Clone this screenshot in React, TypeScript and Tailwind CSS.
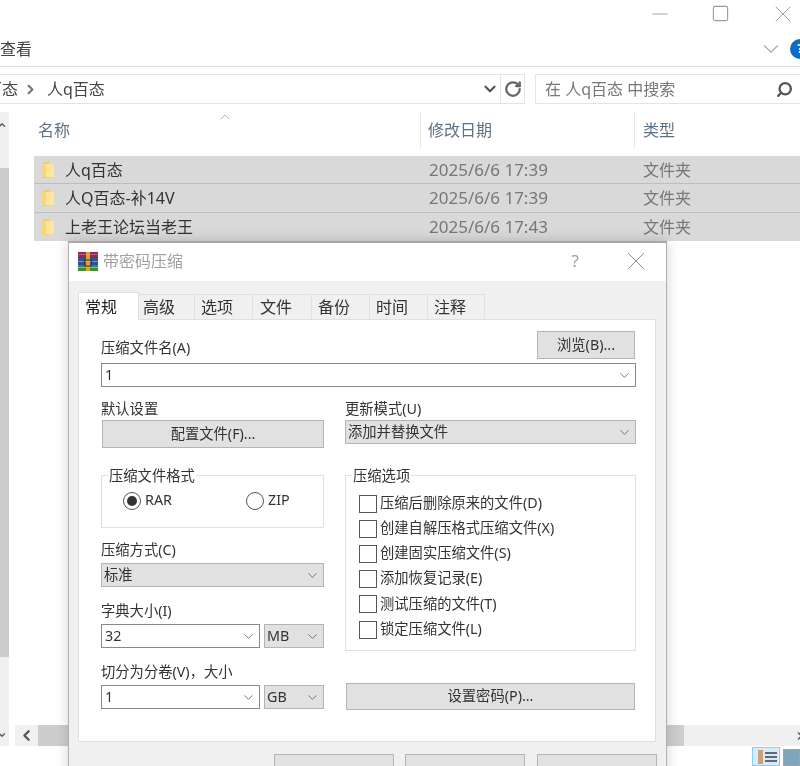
import type { ReactNode } from "react";
import { ChevronDown, ChevronLeft, ChevronRight, ChevronUp, Minus, RotateCw, Search, Square, X } from "lucide-react";

const FONT = { fontFamily: '"Noto Sans", "Noto Sans CJK SC", sans-serif' };

const rows = [
  { name: "人q百态", date: "2025/6/6 17:39" },
  { name: "人Q百态-补14V", date: "2025/6/6 17:39" },
  { name: "上老王论坛当老王", date: "2025/6/6 17:43" },
];

const tabs = [
  { label: "高级", cls: "w-[56px] pl-[4px]" },
  { label: "选项", cls: "w-[58px] pl-[6px]" },
  { label: "文件", cls: "w-[59px] pl-[7px]" },
  { label: "备份", cls: "w-[58px] pl-[6px]" },
  { label: "时间", cls: "w-[58px] pl-[6px]" },
  { label: "注释", cls: "w-[57px] pl-[6px]" },
];

const options = [
  "压缩后删除原来的文件(D)",
  "创建自解压格式压缩文件(X)",
  "创建固实压缩文件(S)",
  "添加恢复记录(E)",
  "测试压缩的文件(T)",
  "锁定压缩文件(L)",
];

function Folder() {
  return (
    <svg width="14" height="18" viewBox="0 0 14 18" className="shrink-0">
      <path d="M1 2 L8 0.5 L8 16.5 L1 17 Z" fill="#f2c95c" />
      <path d="M5 3 H13 V16 H5 Z" fill="#fde59a" />
      <path d="M1 2 L5 3 V16 L1 17 Z" fill="#f5d67c" />
    </svg>
  );
}

// winrar's stack of books
function RarIcon() {
  return (
    <svg width="20" height="19" viewBox="0 0 20 19" className="shrink-0">
      <rect x="0" y="0" width="20" height="6" fill="#8e2a4e" />
      <rect x="0" y="6" width="20" height="7" fill="#2c4f9e" />
      <rect x="0" y="13" width="20" height="6" fill="#3f8a3c" />
      <rect x="0" y="2" width="20" height="1" fill="#c9578f" />
      <rect x="0" y="9" width="20" height="1" fill="#6f8ed6" />
      <rect x="0" y="15" width="20" height="1" fill="#84c070" />
      <rect x="8" y="0" width="4" height="19" fill="#d8a13a" />
      <rect x="6.5" y="8" width="7" height="6" fill="none" stroke="#4a3a20" strokeWidth="1" />
    </svg>
  );
}

function Caret({ size = 15 }: { size?: number }) {
  return <ChevronDown size={size} strokeWidth={1.25} className="shrink-0 text-[#555]" />;
}

function Select({ text, className }: { text: string; className: string }) {
  return (
    <div className={`flex h-[24px] items-center justify-between border border-[#b4b4b4] bg-[#e1e1e1] pl-[2px] pr-[3px] text-[14.3px] text-[#333] ${className}`}>
      <span className="pb-[1px]">{text}</span>
      <Caret />
    </div>
  );
}

function Combo({ text, className }: { text: string; className: string }) {
  return (
    <div className={`flex h-[24px] items-center justify-between border border-[#8a8a8a] bg-white pl-[3px] pr-[3px] text-[14.3px] text-[#333] ${className}`}>
      <span className="pb-[1px]">{text}</span>
      <Caret />
    </div>
  );
}

function Btn({ children, className }: { children?: ReactNode; className: string }) {
  return (
    <div className={`flex items-center justify-center border border-[#b4b4b4] bg-[#e1e1e1] pb-[1px] text-[14.3px] text-[#333] ${className}`}>
      {children}
    </div>
  );
}

function Label({ children }: { children: ReactNode }) {
  return <div className="flex h-[20px] items-center pb-[1px] text-[14.3px] leading-none text-[#333]">{children}</div>;
}

function Group({ title, className, children }: { title: string; className: string; children: ReactNode }) {
  return (
    <div className={`relative border border-[#e0e0e0] ${className}`}>
      <span className="absolute left-[6px] top-[-10px] bg-white px-px text-[14.3px] leading-[20px] text-[#333]">{title}</span>
      {children}
    </div>
  );
}

function Radio({ label, on, className }: { label: string; on?: boolean; className: string }) {
  return (
    <div className={`flex items-center gap-[4px] text-[14.3px] text-[#333] ${className}`}>
      <span className="flex h-[18px] w-[18px] items-center justify-center rounded-full border border-[#555] bg-white">
        {on && <span className="h-[10px] w-[10px] rounded-full bg-[#333]" />}
      </span>
      <span className="pb-[2px]">{label}</span>
    </div>
  );
}

function Dialog() {
  return (
    <div className="absolute left-[68px] top-[241px] flex h-[540px] w-[599px] flex-col border border-t-2 border-[#b0b0b0] border-t-[#a8a8a8] bg-[#f0f0f0] shadow-[0_0_12px_rgba(0,0,0,0.18)]">
      <div className="flex h-[38px] shrink-0 items-center bg-white pb-[2px] pl-[9px] pr-[15px]">
        <RarIcon />
        <span className="ml-[5px] text-[16px] text-[#a0a0a0]">带密码压缩</span>
        <span className="ml-auto text-[17px] text-[#a0a0a0]">?</span>
        <X size={30} strokeWidth={0.8} className="ml-[42px] text-[#8a8a8a]" />
      </div>

      <div className="flex flex-1 flex-col px-[9px] pt-[11px]">
        <div className="relative z-10 flex h-[28px] items-end">
          <div className="flex h-[28px] w-[61px] items-center border border-b-0 border-[#e0e0e0] bg-white pl-[6px] text-[16px] text-[#222]">常规</div>
          {tabs.map((t) => (
            <div key={t.label} className={`flex h-[26px] items-center border-y border-r border-[#e0e0e0] bg-[#f0f0f0] text-[16px] text-[#333] ${t.cls}`}>
              {t.label}
            </div>
          ))}
        </div>

        <div className="-mt-px h-[423px] w-[578px] border border-[#e0e0e0] bg-white pl-[22px] pr-[18px] pt-[11px]">
          <div className="flex items-center justify-between pr-[2px]">
            <div className="pt-[7px]"><Label>压缩文件名(A)</Label></div>
            <Btn className="h-[28px] w-[98px]">浏览(B)...</Btn>
          </div>
          <Combo text="1" className="mt-[4px] w-[535px]" />

          <div className="mt-[13px] flex gap-[21px]">
            <div className="w-[223px]">
              <Label>默认设置</Label>
              <Btn className="ml-px h-[28px] w-[222px]">配置文件(F)...</Btn>

              <Group title="压缩文件格式" className="mt-[27px] flex h-[53px] items-start pt-[13px]">
                <Radio label="RAR" on className="ml-[21px] w-[123px]" />
                <Radio label="ZIP" className="" />
              </Group>

              <div className="mt-[13px]"><Label>压缩方式(C)</Label></div>
              <Select text="标准" className="mt-[2px] w-[223px]" />

              <div className="mt-[15px]"><Label>字典大小(I)</Label></div>
              <div className="mt-[2px] flex gap-[4px]">
                <Combo text="32" className="w-[159px]" />
                <Select text="MB" className="w-[60px]" />
              </div>

              <div className="mt-[15px]"><Label>切分为分卷(V)，大小</Label></div>
              <div className="mt-[2px] flex gap-[4px]">
                <Combo text="1" className="w-[159px]" />
                <Select text="GB" className="w-[60px]" />
              </div>
            </div>

            <div className="w-[291px]">
              <Label>更新模式(U)</Label>
              <Select text="添加并替换文件" className="w-[291px]" />

              <Group title="压缩选项" className="mt-[31px] h-[176px] pl-[13px] pt-[15px]">
                {options.map((o) => (
                  <div key={o} className="flex h-[25.2px] items-center gap-[3px] text-[14.3px] text-[#333]">
                    <span className="h-[18px] w-[18px] shrink-0 border border-[#555] bg-white" />
                    <span className="pb-[2px]">{o}</span>
                  </div>
                ))}
              </Group>

              <Btn className="ml-px mt-[32px] h-[27px] w-[289px]">设置密码(P)...</Btn>
            </div>
          </div>
        </div>

        <div className="mt-[12px] flex justify-end">
          <Btn className="h-[28px] w-[120px]" />
          <Btn className="ml-[11px] h-[28px] w-[120px]" />
          <Btn className="ml-[12px] h-[28px] w-[120px]" />
        </div>
      </div>
    </div>
  );
}

export default function App() {
  return (
    <div className="relative flex h-[766px] w-[800px] flex-col overflow-hidden bg-white text-[#444] blur-[0.35px]" style={FONT}>
      <div className="flex h-[33px] shrink-0 items-start justify-end pr-[3px] text-[#9a9a9a]">
        <div className="flex h-[27px] items-center gap-[39px]">
          <Minus size={24} strokeWidth={0.9} />
          <Square size={19} strokeWidth={1.4} />
          <X size={28} strokeWidth={0.8} />
        </div>
      </div>

      <div className="flex h-[34px] shrink-0 items-center border-b border-[#dcdcdc] pb-px">
        <span className="text-[16px] text-[#444]">查看</span>
        <ChevronDown size={26} strokeWidth={1} className="ml-auto mr-[6px] text-[#a8a8a8]" />
        <span className="mr-[-10px] flex h-[20px] w-[20px] items-center justify-center rounded-full bg-[#0a6cc4] text-[12px] font-bold text-white">?</span>
      </div>

      <div className="mt-[7px] flex h-[30px] shrink-0">
        <div className="flex w-[501px] items-center border-y border-r border-[#e4e4e4] text-[16px] text-[#444]">
          <span className="ml-[-14px]">百态</span>
          <ChevronRight size={15} strokeWidth={3.5} className="ml-[5px] text-[#777]" />
          <span className="ml-[9px]">人q百态</span>
          <ChevronDown size={18} strokeWidth={3} className="ml-auto mr-[1px] text-[#555]" />
        </div>
        <div className="flex w-[24px] items-center justify-center border-y border-r border-[#e4e4e4]">
          <RotateCw size={18} strokeWidth={3} className="text-[#666]" />
        </div>
        <div className="ml-[10px] flex flex-1 items-center border border-r-0 border-[#e4e4e4] pl-[9px] pr-[7px] text-[16px] text-[#777]">
          <span>在 人q百态 中搜索</span>
          <Search size={17} strokeWidth={3.25} className="ml-auto -scale-x-100 text-[#555]" />
        </div>
      </div>

      <div className="mt-[8px] flex min-h-0 flex-1">
        <div className="flex h-[634px] w-[9px] shrink-0 flex-col bg-[#f0f0f0]">
          <ChevronUp size={10} strokeWidth={3} className="ml-[-3px] mt-[8px] text-[#555]" />
          <div className="mt-[38px] h-[489px] w-[9px] bg-[#cdcdcd]" />
          <ChevronDown size={10} strokeWidth={3} className="ml-[-3px] mt-[73px] text-[#555]" />
        </div>

        <div className="flex min-w-0 flex-1 flex-col">
          <div className="relative flex h-[36px] shrink-0 text-[16px] text-[#5f7186]">
            <ChevronUp size={16} strokeWidth={1} className="absolute left-[208px] top-[-3px] text-[#888]" />
            <div className="flex w-[411px] items-center pl-[29px]">名称</div>
            <div className="flex w-[214px] items-center border-l border-[#e8e8e8] pl-[7px]">修改日期</div>
            <div className="flex flex-1 items-center border-l border-[#e8e8e8] pl-[8px]">类型</div>
          </div>

          <div className="ml-[25px] mt-[8px] shrink-0">
            {rows.map((r, i) => (
              <div key={r.name} className={`flex h-[28.3px] items-center bg-[#d9d9d9] text-[16px] ${i < 2 ? "border-b border-[#bdbdbd]" : ""}`}>
                <div className="flex w-[395px] items-center pl-[7px] text-[#333]">
                  <Folder />
                  <span className="ml-[10px] whitespace-nowrap">{r.name}</span>
                </div>
                <div className="w-[214px] whitespace-nowrap text-[17px] text-[#777]">{r.date}</div>
                <div className="text-[#777]">文件夹</div>
              </div>
            ))}
          </div>

          <div className="mt-auto flex h-[21px] shrink-0 pl-[6px]">
            <div className="flex w-[23px] items-center justify-center bg-[#f0f0f0]">
              <ChevronLeft size={17} strokeWidth={3.25} className="text-[#555]" />
            </div>
            <div className="w-[646px] bg-[#cdcdcd]" />
            <div className="flex flex-1 items-center justify-end bg-[#f0f0f0]">
              <ChevronRight size={12} strokeWidth={3} className="mr-[-6px] text-[#555]" />
            </div>
          </div>

          <div className="flex h-[20px] shrink-0 items-end justify-end">
            <div className="flex h-[19px] w-[28px] items-center gap-[2px] border border-[#8ecbf0] bg-[#d5ecfb] pl-[5px]">
              <span className="h-[14px] w-[5px] bg-[#c9a27a]" />
              <div className="flex flex-col gap-[2px]">
                <span className="h-[2px] w-[12px] bg-[#667]" />
                <span className="h-[2px] w-[12px] bg-[#667]" />
                <span className="h-[2px] w-[12px] bg-[#667]" />
              </div>
            </div>
            <div className="ml-[3px] h-[17px] w-[17px] border border-[#9aa5b0] bg-[#7fa6b8]" />
          </div>
        </div>
      </div>

      <Dialog />
    </div>
  );
}
